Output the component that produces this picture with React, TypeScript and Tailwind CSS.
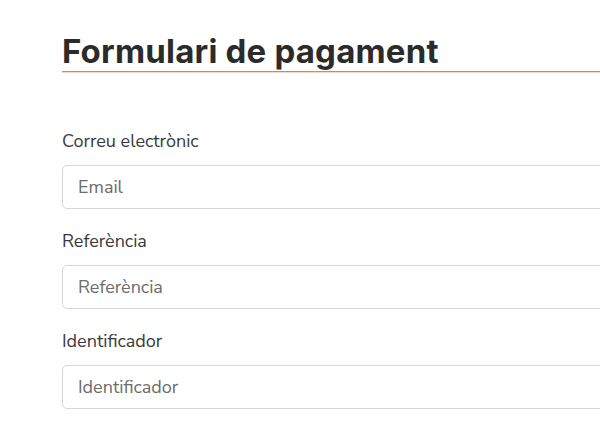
export default function App() {
  const fields = [
    { label: "Correu electrònic", ph: "Email" },
    { label: "Referència", ph: "Referència" },
    { label: "Identificador", ph: "Identificador" },
  ];
  return (
    <div className="w-[600px] h-[428px] overflow-hidden bg-white">
      <div className="pl-[62px] w-[700px]">
        <h1
          className="pt-[33px] text-[33px] leading-[36px] font-bold text-[#2b2b2b] tracking-[0.2px] pb-[2px]"
          style={{ fontFamily: "Inter, 'Noto Sans', sans-serif" }}
        >
          Formulari de pagament
        </h1>
        <div className="h-[1px] bg-[#d48a4c]" />
        <div className="h-[1px] bg-[#f3d9c2]" />
        <div className="pt-[56px] flex flex-col gap-[20px]" style={{ fontFamily: "'Nunito Sans', Lato, 'Open Sans', sans-serif" }}>
          {fields.map((f) => (
            <div key={f.label} className="flex flex-col">
              <label className="text-[18px] leading-[24px] text-[#3a3a3a] mb-[12px]">{f.label}</label>
              <input
                placeholder={f.ph}
                className="h-[44px] w-[640px] rounded-[5px] border border-[#d6d6d6] px-[15px] text-[18px] placeholder:text-[#6c6c6c] outline-none"
              />
            </div>
          ))}
        </div>
      </div>
    </div>
  );
}
